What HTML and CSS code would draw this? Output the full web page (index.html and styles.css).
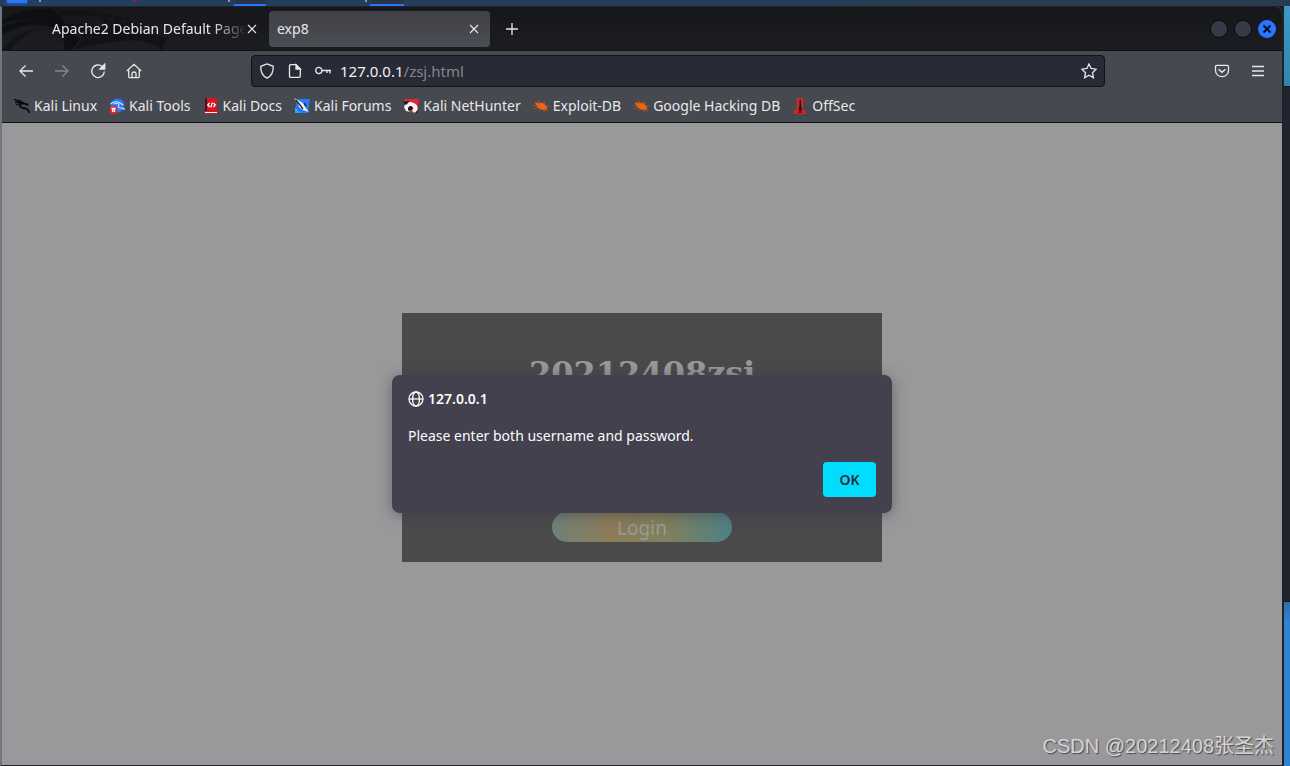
FILE: index.html
```html
<!DOCTYPE html>
<html lang="en">
<head>
<meta charset="utf-8">
<title>exp8</title>
<link rel="stylesheet" href="styles.css">
</head>
<body>
<div class="panel" aria-hidden="true">
  <span class="panel-app"></span>
  <span class="panel-speck speck-one"></span>
  <span class="panel-dot"></span>
  <span class="panel-speck speck-two"></span>
  <span class="panel-task task-one"></span>
  <span class="panel-speck speck-three"></span>
  <span class="panel-task task-two"></span>
</div>
<div class="desktop">
  <div class="window">
    <header class="tabbar">
      <svg class="dragon" viewBox="0 0 180 43" width="180" height="43" aria-hidden="true">
        <path d="M0 13Q25 0 51 2L78 33 69 43H61Q67 36 50 20Q25 14 0 27V20Q25 10 44 13Q25 9 0 17Z" fill="#0e0f11"/>
        <path d="M0 43Q14 25 36 22Q18 29 8 43ZM55 3Q106 2 133 15Q108 8 58 8ZM63 17Q92 15 110 23L96 9Q109 12 114 20L111 10Q122 14 124 22L123 14Q138 21 137 26L165 31 160 43Q149 34 130 33Q100 35 70 43Q91 28 67 24Z" fill="#121316"/>
      </svg>
      <div class="tab">
        <span class="tab-title fade">Apache2 Debian Default Page</span>
        <button class="close" aria-label="Close tab"><svg width="10" height="10" viewBox="0 0 10 10"><path d="M1 1L9 9M9 1L1 9"/></svg></button>
      </div>
      <div class="tab active">
        <span class="tab-title">exp8</span>
        <button class="close" aria-label="Close tab"><svg width="10" height="10" viewBox="0 0 10 10"><path d="M1 1L9 9M9 1L1 9"/></svg></button>
      </div>
      <button class="new-tab" aria-label="New tab"><svg width="14" height="14" viewBox="0 0 14 14"><path d="M7 1V13M1 7H13"/></svg></button>
      <div class="controls">
        <button class="control" aria-label="Minimize"></button>
        <button class="control" aria-label="Maximize"></button>
        <button class="control control-close" aria-label="Close"><svg width="12" height="12" viewBox="0 0 12 12"><path d="M2.500 2.500L9.500 9.500M9.500 2.500L2.500 9.500"/></svg></button>
      </div>
    </header>
    <nav class="toolbar">
      <div class="nav-buttons">
        <button class="icon" aria-label="Back"><svg width="16" height="16" viewBox="0 0 16 16"><path d="M15 8H2M7.500 2.500L2 8L7.500 13.500"/></svg></button>
        <button class="icon dim" aria-label="Forward"><svg width="16" height="16" viewBox="0 0 16 16"><path d="M1 8H14M8.500 2.500L14 8L8.500 13.500"/></svg></button>
        <button class="icon" aria-label="Reload"><svg width="16" height="16" viewBox="0 0 16 16"><path d="M12.300 3.600A6.300 6.300 0 1 0 14.300 8.500"/><path d="M14.700 1.200V6H9.900Z" class="solid"/></svg></button>
        <button class="icon" aria-label="Home"><svg width="16" height="16" viewBox="0 0 16 16"><path d="M.8 8L8 1.300L15.200 8M2.700 7V13.500Q2.700 14.700 3.900 14.700H12.100Q13.300 14.700 13.300 13.500V7M6 14.500V10.500Q6 9 8 9T10 10.500V14.500"/></svg></button>
      </div>
      <div class="urlbar">
        <svg width="16" height="16" viewBox="0 0 16 16"><path d="M8 .9L14.200 3.300C14.600 9 12.300 13 8 15.200C3.700 13 1.400 9 1.800 3.300Z"/></svg>
        <svg width="16" height="16" viewBox="0 0 16 16"><path d="M3.800 1.700H9L13.300 6V13Q13.300 14.300 12 14.300H3.800Q2.500 14.300 2.500 13V3Q2.500 1.700 3.800 1.700Z"/><path d="M9 1.700V6H13.300Z" class="solid"/></svg>
        <svg width="16" height="16" viewBox="0 0 16 16"><circle cx="3.800" cy="7.500" r="3.100"/><path d="M7 7.500H16M12 7.500V10M15 7.500V10.500"/></svg>
        <span class="url"><b>127.0.0.1</b>/zsj.html</span>
        <button class="star" aria-label="Bookmark this page"><svg width="16" height="16" viewBox="0 0 16 16"><path d="M8 1L10.100 5.500L15.200 6.200L11.500 9.700L12.400 14.700L8 12.300L3.600 14.700L4.500 9.700L.8 6.200L5.900 5.500Z"/></svg></button>
      </div>
      <div class="tools">
        <button class="icon" aria-label="Save to Pocket"><svg width="16" height="16" viewBox="0 0 16 16"><path d="M2.800 2.300H13.200Q14.500 2.300 14.500 3.600V7.500A6.500 6.200 0 0 1 1.500 7.500V3.600Q1.500 2.300 2.800 2.300ZM4.600 6.200L8 9.300L11.400 6.200"/></svg></button>
        <button class="icon" aria-label="Open menu"><svg width="16" height="16" viewBox="0 0 16 16"><path d="M2 3.500H14M2 8H14M2 12.500H14"/></svg></button>
      </div>
    </nav>
    <nav class="bookmarks">
      <a href="#"><svg width="16" height="16" viewBox="0 0 16 16"><g fill="none" stroke="#08090b" stroke-width="1.300"><path d="M0 1.500L7 3.300L10 5.500M1 4.500L6 4L9 6M2 7L6 5.500"/><path d="M10 5.500L14 7M12 5.500L14 7.500M10 5Q4 6 6.500 9Q9 10.500 12 10.500Q14 11 15.500 15" stroke-width="1.800"/></g></svg>Kali Linux</a>
      <a href="#"><svg width="16" height="16" viewBox="0 0 16 16"><circle cx="8.500" cy="7.500" r="7" fill="#2777ff"/><path d="M1.500 6Q7 2 11 5L14 7M5 6Q9 4 10 7Q8 10 12 10T15 12" fill="none" stroke="#d7e8ff" stroke-width="1.100"/><circle cx="4.500" cy="12" r="4" fill="#e52727"/><path d="M2.500 10.500H6.500M3.700 10.500V14M5.500 10.500V14" stroke="#fff"/></svg>Kali Tools</a>
      <a href="#"><svg width="16" height="16" viewBox="0 0 16 16"><path d="M2 0H14V16H2Z" fill="#d81421"/><path d="M2 0H4V13H2Z" fill="#421522"/><path d="M2 14H14V15H2Z" fill="#f0f0f0"/><path d="M6.500 5L4.800 7L6.500 9M10.500 5L12.200 7L10.500 9M9.300 4.500L7.700 9.500" fill="none" stroke="#fff"/></svg>Kali Docs</a>
      <a href="#"><svg width="16" height="16" viewBox="0 0 16 16"><path d="M3 1H16L14 15H1Z" fill="#2878f8"/><path d="M1 9L6 15H1Z" fill="#29a8ff"/><path d="M0 0L9 5L11 9L15 14L9 12L5 9L4 5Z" fill="#f2f3f5"/><path d="M2 2L6 7L9 11M10 5L12 8" fill="none" stroke="#1d2433"/></svg>Kali Forums</a>
      <a href="#"><svg width="16" height="16" viewBox="0 0 16 16"><path d="M1 1H16L14 13L9 15Z" fill="#e52635"/><path d="M1 9Q3 3 8 4Q16 6 14.500 12L12 15L9 13Q12 9 8 8Q5 8 5 12L7 14L3 13Z" fill="#f6f6f6"/><path d="M0 4L7 3L3 7M8 8Q5 8 5 12L8 12Q11 10 8 8M12 15L15 12L14 15" fill="#15171c"/></svg>Kali NetHunter</a>
      <a href="#"><svg width="16" height="16" viewBox="0 0 16 16"><path d="M2 5L6 4.500L10 5L14 8.500V12L10 12L5 10Z" fill="#f06412"/><path d="M0 8L4 7M2 4L7 6M5 2L8 6M1 11L6 9M5 13L8 11M11 14L12 10M11 3L12 7M13 9L16 8M12 11L15 13" stroke="#b95526" stroke-width=".8"/></svg>Exploit-DB</a>
      <a href="#"><svg width="16" height="16" viewBox="0 0 16 16"><path d="M2 5L6 4.500L10 5L14 8.500V12L10 12L5 10Z" fill="#f06412"/><path d="M0 8L4 7M2 4L7 6M5 2L8 6M1 11L6 9M5 13L8 11M11 14L12 10M11 3L12 7M13 9L16 8M12 11L15 13" stroke="#b95526" stroke-width=".8"/></svg>Google Hacking DB</a>
      <a href="#"><svg width="16" height="16" viewBox="0 0 16 16"><path d="M5 0H11V11L14 14V16H2V13L5 11Z" fill="#df2024"/><path d="M7.500 2H9V8L10 12L8 14L6.500 12L7.500 8Z" fill="#171114"/><path d="M6 15L8 13L10 15" fill="none" stroke="#5b1118"/></svg>OffSec</a>
    </nav>
    <main class="page">
      <form class="card">
        <h1>20212408zsj</h1>
        <button class="login" type="button">Login</button>
      </form>
      <section class="dialog" role="alertdialog" aria-labelledby="origin" aria-describedby="message">
        <h2 id="origin"><svg width="16" height="16" viewBox="0 0 16 16"><circle cx="8" cy="8" r="7"/><ellipse cx="8" cy="8" rx="3.500" ry="7"/><path d="M1 8H15"/></svg>127.0.0.1</h2>
        <p id="message">Please enter both username and password.</p>
        <button class="ok">OK</button>
      </section>
      <p class="watermark">CSDN @20212408张圣杰</p>
    </main>
  </div>
  <div class="backdrop" aria-hidden="true"><span class="back-top"></span><span class="back-middle"></span><span class="back-bottom"></span></div>
</div>
</body>
</html>
```
FILE: styles.css
```css
* { box-sizing: border-box; }
body {
  margin: 0;
  min-height: 100vh;
  display: flex;
  flex-direction: column;
  background: #1a1b1f;
  font: 14px/20px "Noto Sans", "Noto Sans CJK SC", sans-serif;
  color: #e8e8ea;
}
button { border: 0; padding: 0; background: none; color: inherit; font: inherit; }
svg { flex: none; display: block; fill: none; stroke: currentColor; stroke-width: 1.3; }
svg .solid { fill: currentColor; }

.panel { height: 6px; display: flex; background: linear-gradient(90deg, #233e60, #293c4e); }
.panel-app { width: 20px; height: 3px; margin-left: 7px; background: #2777ff; box-shadow: 0 0 4px #2777ff; }
.panel-speck { width: 2px; height: 2px; background: #8e99a5; }
.speck-one { margin-left: 12px; }
.panel-dot { width: 4px; height: 2px; margin-left: 92px; background: #8d263b; }
.speck-two { margin-left: 91px; }
.panel-task { height: 6px; background: #263445; border-bottom: 2px solid #2777ff; }
.task-one { width: 32px; margin-left: 4px; }
.speck-three { margin-left: 99px; }
.task-two { width: 34px; margin-left: 3px; }

.desktop { flex: 1; display: flex; }
.window {
  flex: 1;
  display: flex;
  flex-direction: column;
  border: 1px solid #20222b;
  border-left: 2px solid #73777d;
  border-right: 2px solid #20222b;
  border-top-right-radius: 8px;
  background: #46494f;
}
.tabbar {
  position: relative;
  height: 44px;
  display: flex;
  align-items: center;
  padding: 0 6px 0 36px;
  background: linear-gradient(#16171a, #1c1d22);
  border-bottom: 1px solid #101114;
  border-top-right-radius: 7px;
}
.dragon { position: absolute; left: 0; top: 0; stroke: none; }
.tab { position: relative; width: 225px; height: 36px; display: flex; align-items: center; padding: 0 9px 0 14px; }
.tab.active { width: 221px; margin-left: 6px; padding: 0 11px 0 8px; border-radius: 4px; background: linear-gradient(#404146, #4a4d53); }
.tab-title { flex: 1; white-space: nowrap; }
.fade { mask-image: linear-gradient(90deg, #000 82%, transparent); }
.close svg { stroke-width: 1.1; }
.new-tab { margin-left: 15px; }
.controls { display: flex; gap: 6px; margin-left: auto; }
.control { width: 18px; height: 18px; display: grid; place-items: center; border-radius: 50%; border: 1px solid #08090b; background: #363b48; }
.control-close { border-color: #2777ff; background: #2777ff; color: #0b1020; }
.control-close svg { stroke-width: 2; }

.toolbar { height: 40px; display: flex; align-items: center; padding: 0 16px; }
.nav-buttons { display: flex; gap: 20px; }
.dim { color: #85878b; }
.urlbar {
  flex: 1;
  height: 32px;
  display: flex;
  align-items: center;
  gap: 12px;
  margin: 0 109px;
  padding: 0 7px;
  border: 1px solid #101116;
  border-radius: 4px;
  background: #282a36;
}
.urlbar > .url { flex: 1; margin-left: -3px; font-size: 15px; color: #85868e; }
.url b { font-weight: 400; color: #f1f1f4; }
.tools { display: flex; gap: 20px; }
.bookmarks { height: 32px; display: flex; align-items: center; gap: 12px; padding: 0 12px 2px; border-bottom: 1px solid #111216; }
.bookmarks a { display: flex; align-items: center; gap: 4px; color: inherit; text-decoration: none; white-space: nowrap; }
.bookmarks svg { stroke: none; }

.page { position: relative; flex: 1; display: flex; justify-content: center; align-items: flex-start; padding-top: 190px; background: #99999b; }
.card { width: 480px; min-height: 249px; display: flex; flex-direction: column; justify-content: space-between; align-items: center; padding: 40px 20px 20px; background: #4a4a4b; color: #99999b; }
.card h1 { margin: 0; font: bold 32px/40px "DejaVu Serif", serif; }
.login { width: 180px; height: 30px; padding-top: 2px; border-radius: 15px; font-size: 19px; background: linear-gradient(90deg, #6f8278, #8d7a57 33%, #7c815d 66%, #4d8187); }
.dialog {
  position: absolute;
  top: 252px;
  left: 50%;
  width: 500px;
  transform: translateX(-50%);
  display: flex;
  flex-direction: column;
  padding: 14px 16px 16px;
  border-radius: 8px;
  background: #42414d;
  color: #fbfbfe;
  box-shadow: 0 2px 14px #3a394488;
}
.dialog h2 { display: flex; align-items: center; gap: 4px; margin: 0 0 17px; font-size: 14px; line-height: 20px; font-weight: 600; }
.dialog p { margin: 0 0 16px; }
.ok { align-self: flex-end; width: 53px; height: 35px; border-radius: 4px; background: #00ddff; color: #2b2a33; font-weight: 600; }
.watermark { position: absolute; right: 8px; bottom: 5px; margin: 0; font: 20px/28px "Liberation Sans", "Noto Sans CJK SC", sans-serif; color: #d4d4d6; text-shadow: 1px 1px 1px #4a4a4b; }

.backdrop { width: 6px; display: flex; flex-direction: column; }
.back-top { height: 80px; background: linear-gradient(#3d99c4, #3186af); }
.back-middle { flex: 516; background: #20242e; border: solid #12151c; border-width: 1px 0; }
.back-bottom { flex: 164; background: linear-gradient(#2c6eaa, #2f83d0 20px); }
```
